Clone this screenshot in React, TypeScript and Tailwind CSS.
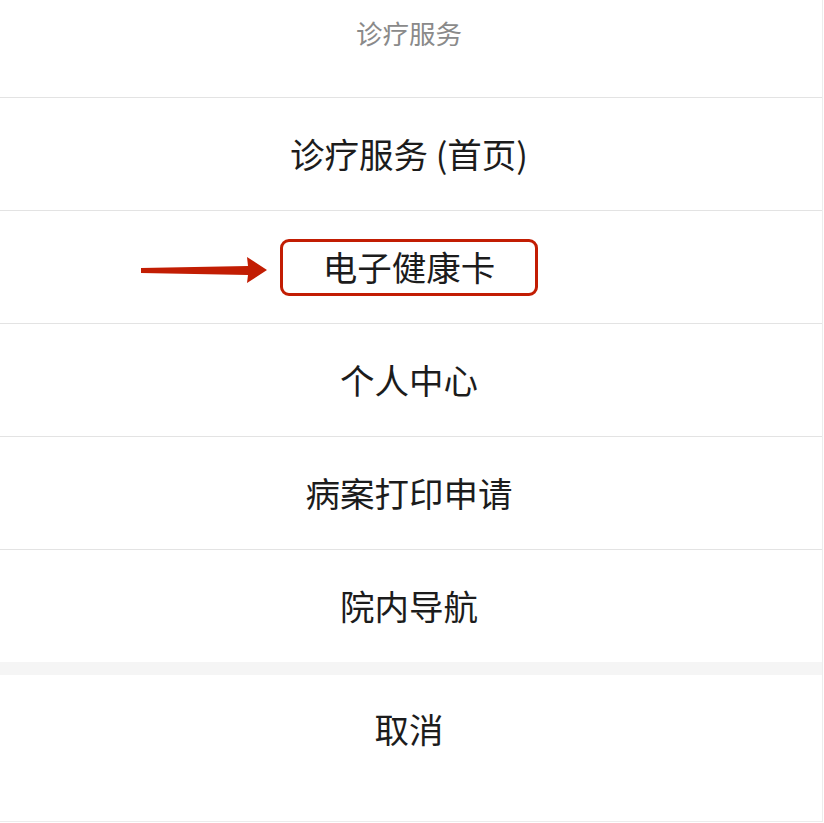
const items = ['诊疗服务 (首页)', '电子健康卡', '个人中心', '病案打印申请', '院内导航']

function Arrow() {
  return (
    <svg
      width="130"
      height="30"
      viewBox="0 0 130 30"
      className="absolute left-[139px] top-[256px]"
      aria-hidden="true"
    >
      <path d="M2 12 L109 10 L108 1 L128 14 L108 27 L109 19 L2 17 Z" fill="#c21d03" />
    </svg>
  )
}

export default function App(): JSX.Element {
  return (
    <div
      className="relative w-[824px] h-[823px] bg-white"
      style={{ fontFamily: '"Noto Sans CJK SC", "Noto Sans", sans-serif' }}
    >
      <div className="w-[823px] h-[822px] border-r border-b border-[#ececec] flex flex-col">
        {/* sheet title */}
        <div className="h-[97px] shrink-0">
          <div className="h-[66px] flex items-center justify-center pr-[4px] text-[26.5px] text-[#8a8a8a]">
            诊疗服务
          </div>
        </div>

        {items.map((label, i) => (
          <div
            key={label}
            className="h-[113px] shrink-0 border-t border-[#e3e3e3] flex items-center justify-center pr-[4px] text-[34.5px] text-[#1c1c1c]"
          >
            {i === 1 ? (
              <div className="w-[258px] h-[57px] rounded-[9px] border-[3px] border-[#c21d03] flex items-center justify-center">
                {label}
              </div>
            ) : (
              label
            )}
          </div>
        ))}

        <div className="h-[13px] shrink-0 bg-[#f5f5f5]" />

        <div className="flex-1">
          <div className="h-[108px] flex items-center justify-center pr-[4px] text-[34.5px] text-[#1c1c1c]">
            取消
          </div>
        </div>
      </div>

      <Arrow />
    </div>
  )
}
